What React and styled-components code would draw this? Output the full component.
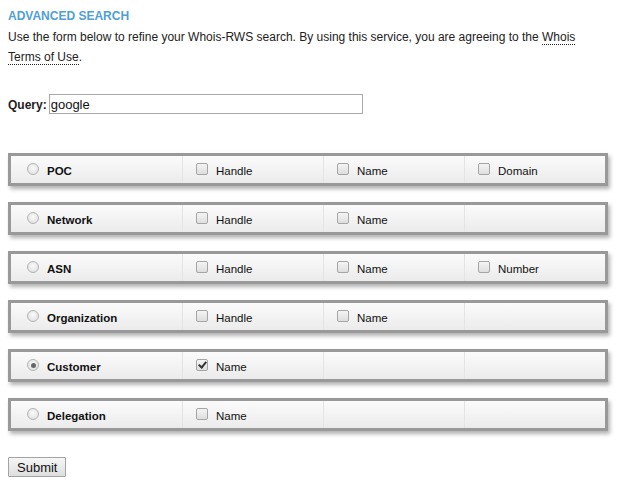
import React from 'react';
import styled, { createGlobalStyle } from 'styled-components';

const GlobalStyle = createGlobalStyle`
    body {
        margin: 0;
        background: #fff;
        font-family: "Liberation Sans", Arial, sans-serif;
        color: #222;
    }
`;

const Page = styled.div`
    width: 600px;
    padding: 8px;
`;

const Heading = styled.h2`
    margin: 0;
    font-size: 12px;
    line-height: 16px;
    font-weight: bold;
    text-transform: uppercase;
    color: #4ea0d6;
`;

const Intro = styled.p`
    margin: 3px 0 0;
    font-size: 12px;
    line-height: 20px;
`;

const TermsLink = styled.a`
    color: #222;
    text-decoration: none;
    border-bottom: 1px dotted #222;
`;

const QueryRow = styled.div`
    display: flex;
    align-items: center;
    gap: 2px;
    margin-top: 27px;
    font-size: 12px;
`;

const QueryLabel = styled.label`
    font-weight: bold;
    padding-top: 1px;
`;

const QueryInput = styled.input`
    box-sizing: border-box;
    width: 314px;
    height: 20px;
    padding: 0 1px;
    border: 1px solid #a9a9a9;
    font-family: "Liberation Sans", Arial, sans-serif;
    font-size: 13px;
    color: #111;
    outline: none;
`;

const Groups = styled.div`
    display: flex;
    flex-direction: column;
    gap: 16px;
    margin-top: 39px;
`;

const GroupRow = styled.div`
    display: grid;
    grid-template-columns: 171px 141px 141px 1fr;
    height: 27px;
    border: 3px solid #999;
    background: linear-gradient(#fbfbfb, #ebebeb);
    box-shadow: 2px 3px 4px rgba(0, 0, 0, 0.3);
`;

const Cell = styled.label`
    display: flex;
    align-items: center;
    gap: 8px;
    padding-left: ${p => (p.$first ? '16px' : '13px')};
    padding-top: 2px;
    border-left: ${p => (p.$first ? 'none' : '1px solid #e4e4e4')};
    font-size: 11.5px;
    font-weight: ${p => (p.$first ? 'bold' : 'normal')};
    color: #111;
`;

const Radio = styled.input.attrs({ type: 'radio' })`
    appearance: none;
    position: relative;
    box-sizing: border-box;
    width: 12px;
    height: 12px;
    margin: -3px 0 0;
    border: 1px solid #b3b3b3;
    border-radius: 50%;
    background: radial-gradient(circle at 50% 40%, #fafafa, #dcdcdc);
    &:checked::after {
        content: '';
        position: absolute;
        left: 2.5px;
        top: 2.5px;
        width: 5px;
        height: 5px;
        border-radius: 50%;
        background: #666;
    }
`;

const Check = styled.input.attrs({ type: 'checkbox' })`
    appearance: none;
    position: relative;
    box-sizing: border-box;
    width: 12px;
    height: 12px;
    margin: -4px 0 0;
    border: 1px solid #a5a5a5;
    border-radius: 2px;
    background: linear-gradient(#f4f4f4, #dedede);
    &:checked::after {
        content: '';
        position: absolute;
        left: 3px;
        top: 0px;
        width: 3px;
        height: 6px;
        border: solid #333;
        border-width: 0 2px 2px 0;
        transform: rotate(40deg);
    }
`;

const SubmitButton = styled.button`
    margin-top: 26px;
    height: 20px;
    padding: 0 8px;
    border: 1px solid #a3a3a3;
    border-radius: 1px;
    background: linear-gradient(#f6f6f6, #dedede);
    font-family: "Liberation Sans", Arial, sans-serif;
    font-size: 13px;
    color: #111;
`;

const groups = [
    { name: 'POC', fields: ['Handle', 'Name', 'Domain'] },
    { name: 'Network', fields: ['Handle', 'Name'] },
    { name: 'ASN', fields: ['Handle', 'Name', 'Number'] },
    { name: 'Organization', fields: ['Handle', 'Name'] },
    { name: 'Customer', fields: ['Name'], selected: true, checked: ['Name'] },
    { name: 'Delegation', fields: ['Name'] },
];

const AdvancedSearch = () => (
    <Page>
        <GlobalStyle />
        <Heading>Advanced Search</Heading>
        <Intro>
            Use the form below to refine your Whois-RWS search. By using this service, you are agreeing to the{' '}
            <TermsLink href="#">Whois Terms of Use</TermsLink>.
        </Intro>
        <QueryRow>
            <QueryLabel>Query:</QueryLabel>
            <QueryInput defaultValue="google" />
        </QueryRow>
        <Groups>
            {groups.map(g => (
                <GroupRow key={g.name}>
                    <Cell $first>
                        <Radio name="type" defaultChecked={!!g.selected} />
                        {g.name}
                    </Cell>
                    {[0, 1, 2].map(i => (
                        <Cell key={i}>
                            {g.fields[i] && (
                                <>
                                    <Check defaultChecked={(g.checked || []).includes(g.fields[i])} />
                                    {g.fields[i]}
                                </>
                            )}
                        </Cell>
                    ))}
                </GroupRow>
            ))}
        </Groups>
        <SubmitButton>Submit</SubmitButton>
    </Page>
);

export default AdvancedSearch;
